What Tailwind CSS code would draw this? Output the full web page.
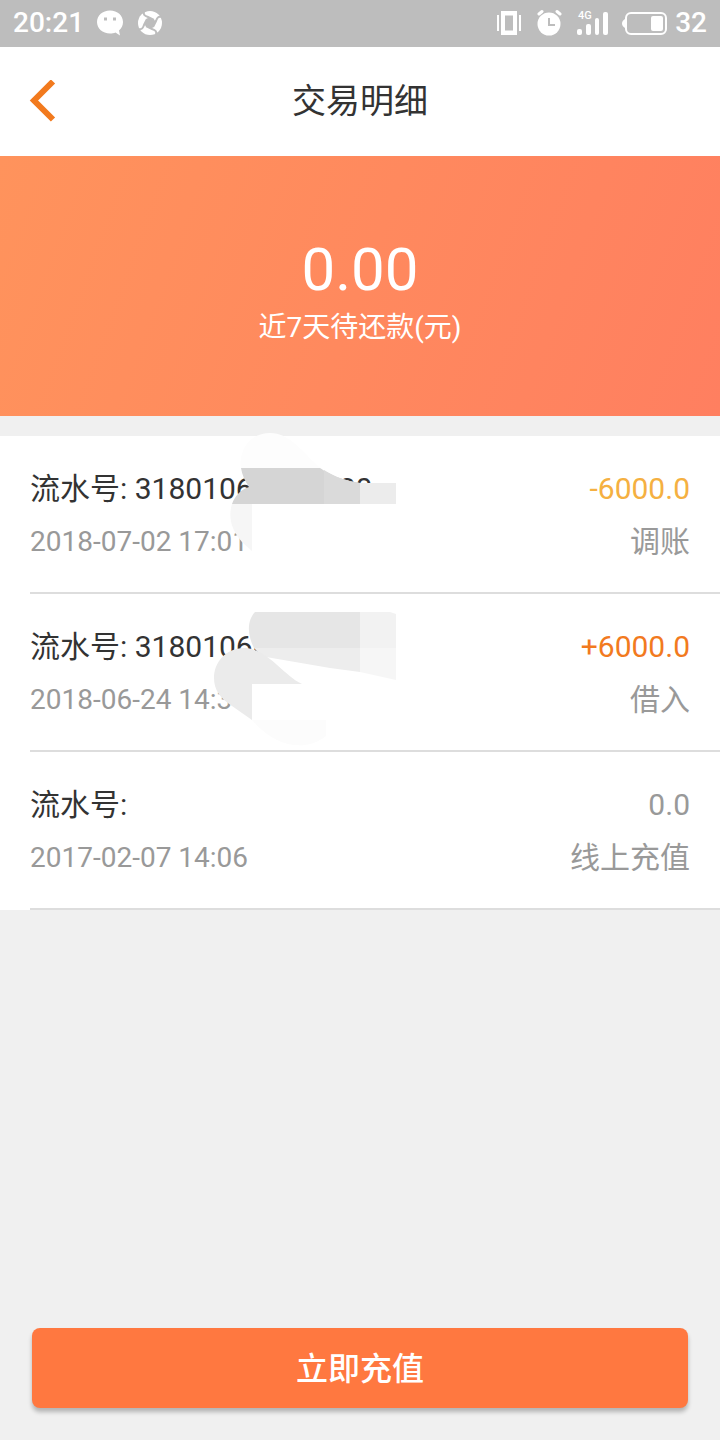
<!DOCTYPE html>
<html lang="zh-CN">
<head>
    <meta charset="UTF-8">
    <meta name="viewport" content="width=device-width, initial-scale=1.0">
    <title>交易明细</title>
    <script src="https://cdn.jsdelivr.net/npm/@tailwindcss/browser@4"></script>
</head>
<body class="bg-[#f0f0f0] min-h-screen flex flex-col font-[Roboto,'Noto_Sans_CJK_SC',sans-serif]">
    <!-- Status bar -->
    <div class="h-[47px] shrink-0 bg-[#bdbdbd] text-white text-[28px] font-medium flex items-center justify-between px-[13px] pb-[2px]">
        <div class="flex items-center gap-3">
            <span>20:21</span>
            <svg class="w-7 h-7" viewBox="0 0 28 28" fill="#fff">
                <path fill-rule="evenodd" d="M14 1.500C6.500 1.500 1 6.500 1 13s5.500 11.500 13 11.500c2 0 4-.3 5.500-1l4.500 3-1-5c2.500-2 4-5 4-8.500C27 6.500 21.500 1.500 14 1.500zM8 8.500h3v3H8zM17 8.500h3v3h-3z"/>
            </svg>
            <svg class="w-7 h-7" viewBox="0 0 28 28">
                <circle cx="14" cy="14" r="12" fill="#fff"/>
                <path fill="#bdbdbd" d="M12 8l8 4-4 8-8-4z"/>
                <g fill="none" stroke="#bdbdbd" stroke-width="2">
                    <path d="M8 3c-1 3 1 4 4 5l6 3"/>
                    <path transform="rotate(90 14 14)" d="M8 3c-1 3 1 4 4 5l6 3"/>
                    <path transform="rotate(180 14 14)" d="M8 3c-1 3 1 4 4 5l6 3"/>
                    <path transform="rotate(270 14 14)" d="M8 3c-1 3 1 4 4 5l6 3"/>
                </g>
            </svg>
        </div>
        <div class="flex items-center gap-3">
            <svg class="w-7 h-7" viewBox="0 0 28 28" fill="#fff">
                <path fill-rule="evenodd" d="M4 2h16v24H4zM8 6.500v15h8v-15z"/>
                <path d="M0 6h2v16H0zM22 6h2v16h-2z"/>
            </svg>
            <svg class="w-7 h-7" viewBox="0 0 28 28" fill="none" stroke="#fff">
                <circle cx="12" cy="15" r="11.500" fill="#fff" stroke="none"/>
                <path stroke-width="3" stroke-linecap="round" d="M2 5l3-2.500M23 5l-3-2.500"/>
                <path stroke="#bdbdbd" stroke-width="2" d="M12 9v7h6"/>
            </svg>
            <svg class="w-8 h-7" viewBox="0 0 32 28" fill="#fff">
                <text x="1" y="10" font-family="Roboto" font-size="11" font-weight="500">4G</text>
                <rect x="0" y="20" width="5" height="6" rx="2"/>
                <rect x="9" y="15" width="5" height="11" rx="2"/>
                <rect x="18" y="9" width="4" height="17" rx="2"/>
                <rect x="26" y="3" width="5" height="23" rx="2"/>
            </svg>
            <div class="flex items-center gap-2">
                <svg class="w-[46px] h-7" viewBox="0 0 46 28" fill="#fff">
                    <rect x="5" y="4" width="40" height="21" rx="5" fill="none" stroke="#fff" stroke-width="2"/>
                    <path d="M4 10v9c-4-2-4-7 0-9z"/>
                    <rect x="30" y="7" width="12" height="15" rx="2"/>
                </svg>
                <span>32</span>
            </div>
        </div>
    </div>

    <!-- Header -->
    <header class="h-[109px] shrink-0 bg-white grid grid-cols-[1fr_auto_1fr] items-center px-7">
        <button type="button" aria-label="返回" class="justify-self-start">
            <svg class="w-7 h-11" viewBox="0 0 28 44" fill="none" stroke="#f27a1e" stroke-width="6">
                <path d="M25 1.500L6 20.500l19 19"/>
            </svg>
        </button>
        <h1 class="text-[34px] text-[#333]">交易明细</h1>
    </header>

    <!-- Amount due -->
    <section class="h-[260px] shrink-0 bg-linear-[110deg,#ff935c,#ff7f60] text-white text-center flex flex-col items-center justify-center pt-5">
        <p class="text-[60px] leading-[64px]">0.00</p>
        <p class="text-[28px] leading-[52px]">近7天待还款(元)</p>
    </section>

    <!-- Records -->
    <ul class="mt-5 bg-white text-[30px] leading-[53px] text-[#999]">
        <li class="relative pl-[30px]">
            <div class="border-b-2 border-[#ddd] pt-[26px] pb-6 pr-[30px]">
                <div class="flex justify-between">
                    <span class="text-[#333]">流水号: 3180106<span class="ml-[86px]">20</span></span>
                    <span class="text-[#f5b041]">-6000.0</span>
                </div>
                <div class="flex justify-between">
                    <time class="text-[28px]">2018-07-02 17:01</time>
                    <span>调账</span>
                </div>
            </div>
            <svg class="absolute left-[220px] -top-4 w-[180px] h-[140px]" viewBox="220 420 180 140">
                <path fill="#fdfdfd" d="M241 469c-3-20 10-36 29-36 22 0 36 24 54 38z"/>
                <path fill="#fff" d="M252 503h144v47H252z"/>
                <path fill="#d5d5d5" d="M241 468h79c9 6 18 11 40 15v21H232c3-8 8-14 17-17-4-6-7-12-8-19z"/>
                <path fill="#dadada" d="M324 470c10 6 20 11 36 13v21h-36z"/>
                <path fill="#ececec" d="M360 483h36v21h-36z"/>
                <path fill="#f6f6f6" d="M232 504h20v47l-10-9c-8-9-15-22-10-38z"/>
            </svg>
        </li>
        <li class="relative pl-[30px]">
            <div class="border-b-2 border-[#ddd] pt-[26px] pb-6 pr-[30px]">
                <div class="flex justify-between">
                    <span class="text-[#333]">流水号: 31801060</span>
                    <span class="text-[#f27a1e]">+6000.0</span>
                </div>
                <div class="flex justify-between">
                    <time class="text-[28px]">2018-06-24 14:3</time>
                    <span>借入</span>
                </div>
            </div>
            <svg class="absolute left-[210px] top-[6px] w-[190px] h-[150px]" viewBox="210 600 190 150">
                <path fill="#fcfcfc" d="M252 720h74v16c-20 16-50 12-74-16z"/>
                <path fill="#e6e6e6" d="M255 612h105v36H254c-6-12-8-26 1-36z"/>
                <path fill="#ededed" d="M254 648h106v24l-30-4-64-11c-5-2-9-5-12-9z"/>
                <path fill="#f2f2f2" d="M360 612h30l6 2v34h-36z"/>
                <path fill="#f6f6f6" d="M360 648h36v32l-36-8z"/>
                <path fill="#ebebeb" d="M252 649c20 6 32 26 50 35h-50v36l-20-14c-12-8-18-16-18-28 0-18 16-34 38-29z"/>
            </svg>
        </li>
        <li class="pl-[30px]">
            <div class="border-b-2 border-[#ddd] pt-[26px] pb-6 pr-[30px]">
                <div class="flex justify-between">
                    <span class="text-[#333]">流水号:</span>
                    <span>0.0</span>
                </div>
                <div class="flex justify-between">
                    <time class="text-[28px]">2017-02-07 14:06</time>
                    <span>线上充值</span>
                </div>
            </div>
        </li>
    </ul>

    <div class="mt-auto px-8 pb-8">
        <button type="button" class="block w-full h-20 pt-[2px] rounded-lg bg-[#ff7840] text-white text-[32px] font-medium shadow-[0_4px_4px_rgba(0,0,0,0.25)]">立即充值</button>
    </div>
</body>
</html>
